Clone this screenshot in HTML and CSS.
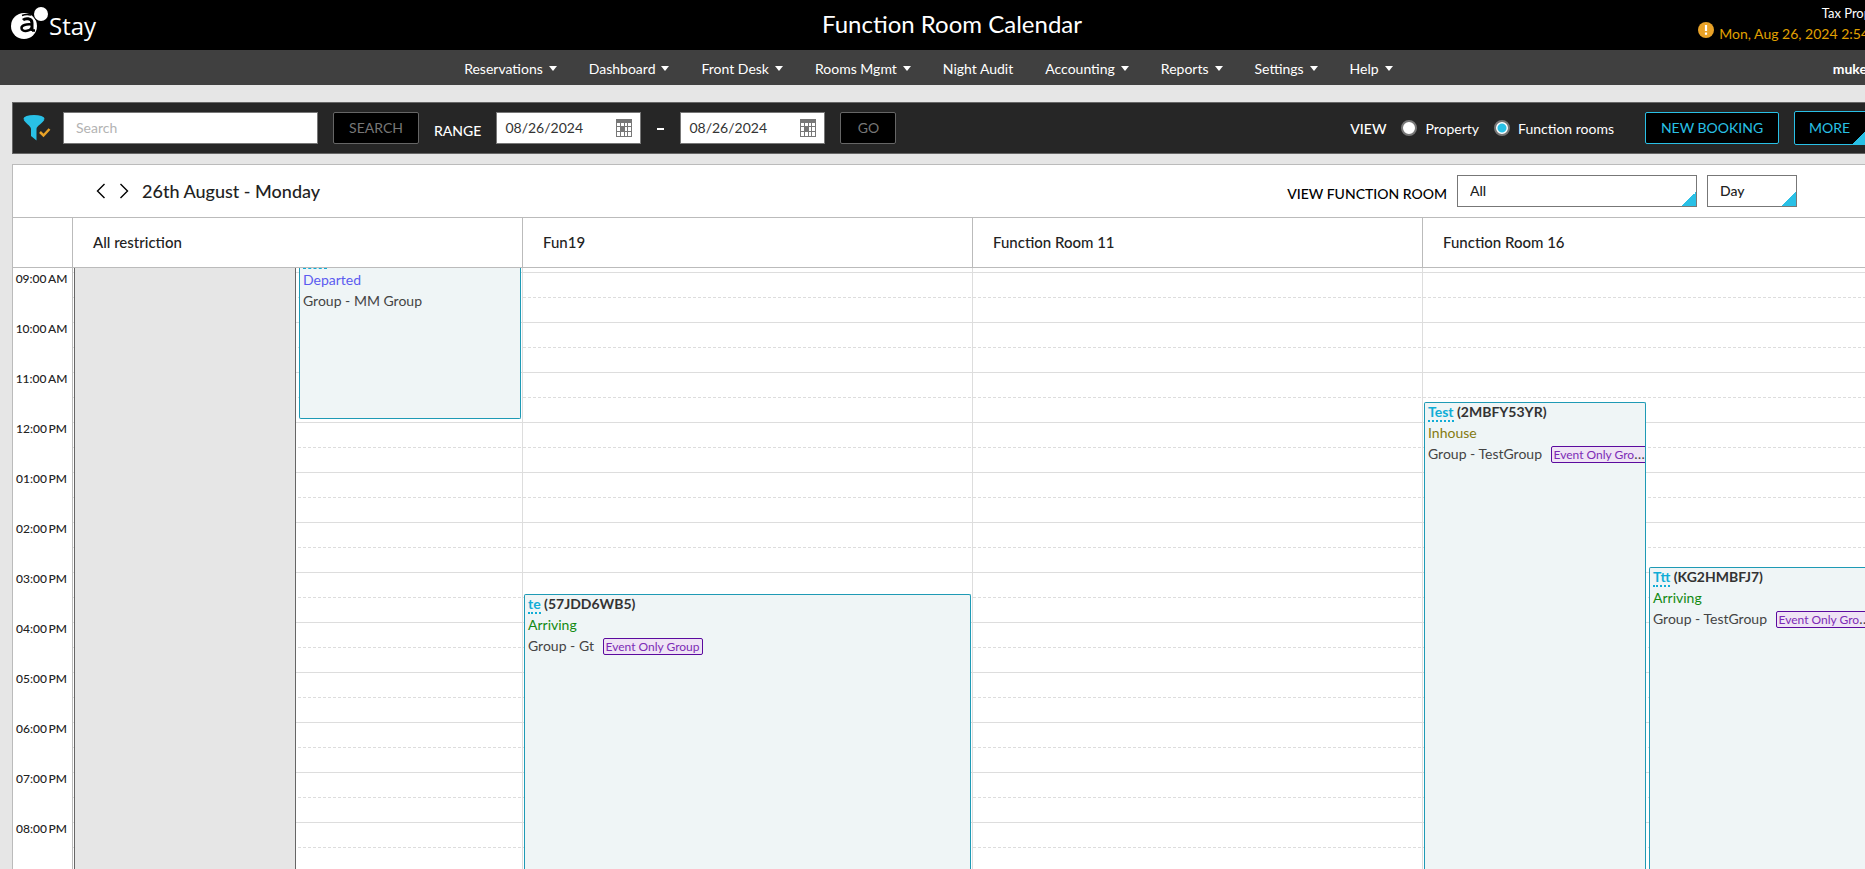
FILE: index.html
```
<!DOCTYPE html>
<html lang="en">
<head>
<meta charset="utf-8">
<title>Function Room Calendar</title>
<link rel="stylesheet" href="styles.css">
</head>
<body>
<div class="app">
  <header class="topbar">
    <a class="logo" href="#">
      <svg class="logo-mark" width="40" height="36" viewBox="0 0 40 36" aria-hidden="true">
        <circle cx="14" cy="20" r="13" fill="#fff"/>
        <circle cx="31" cy="8" r="8" fill="#000"/>
        <circle cx="31" cy="8" r="7" fill="#fff"/>
        <path d="M13 14c2-1.800 9-2.500 9 3V25" fill="none" stroke="#000" stroke-width="3"/>
        <path d="M22 18.500c-6-.5-10.500.5-10.500 3.500 0 4 8 4 10.500-.5M22 24.500h3" fill="none" stroke="#000" stroke-width="2.500"/>
        <path d="M12 9.500c4-1.500 6-1 9-.5" fill="none" stroke="#000" stroke-width="1.500"/>
      </svg>
      <span class="logo-name">Stay</span>
    </a>
    <h1 class="title">Function Room Calendar</h1>
    <div class="property">
      <div class="property-name">Tax Property</div>
      <div class="property-date">
        <svg width="16" height="16" viewBox="0 0 16 16" aria-hidden="true"><circle cx="8" cy="8" r="8" fill="#e9a227"/><path d="M8 3v6M8 10.500v2.300" stroke="#fff" stroke-width="2.200"/></svg>
        <span>Mon, Aug 26, 2024 2:54 PM</span>
      </div>
    </div>
  </header>

  <div class="navbar">
    <nav class="menu">
      <a class="has-menu" href="#">Reservations</a>
      <a class="has-menu" href="#">Dashboard</a>
      <a class="has-menu" href="#">Front Desk</a>
      <a class="has-menu" href="#">Rooms Mgmt</a>
      <a href="#">Night Audit</a>
      <a class="has-menu" href="#">Accounting</a>
      <a class="has-menu" href="#">Reports</a>
      <a class="has-menu" href="#">Settings</a>
      <a class="has-menu" href="#">Help</a>
    </nav>
    <a class="user has-menu" href="#">mukesh</a>
  </div>

  <form class="toolbar">
    <button class="filter" type="button" aria-label="Filter">
      <svg width="28" height="26" viewBox="0 0 28 26" aria-hidden="true">
        <ellipse cx="11" cy="3.500" rx="10.500" ry="3.500" fill="#29c0e6"/>
        <path d="M.5 4.500C2 8 8 11 8 14v7l5.500 4.500V14c0-3 6.500-6 8-9.500z" fill="#29c0e6"/>
        <path d="M17 17l3.500 3.500L26.500 14" fill="none" stroke="#e9a227" stroke-width="2.500"/>
      </svg>
    </button>
    <input class="field search" type="text" placeholder="Search" aria-label="Search">
    <button class="btn btn-search" type="button">SEARCH</button>
    <label class="range-label" for="from">RANGE</label>
    <span class="field date">
      <input id="from" type="text" value="08/26/2024">
      <svg width="16" height="18" viewBox="0 0 16 18" aria-hidden="true"><path d="M0 0h16v18H0z" fill="#777"/><path d="M1 4h3v3H1zM5 4h3v3H5zM9 4h2v3H9zM12 4h3v3h-3zM1 8h3v4H1zM9 8h2v4H9zM12 8h3v4h-3zM1 13h3v4H1zM5 13h3v4H5zM9 13h2v4H9zM12 13h3v4h-3z" fill="#fff"/></svg>
    </span>
    <span class="dash"></span>
    <span class="field date">
      <input type="text" value="08/26/2024" aria-label="Range end">
      <svg width="16" height="18" viewBox="0 0 16 18" aria-hidden="true"><path d="M0 0h16v18H0z" fill="#777"/><path d="M1 4h3v3H1zM5 4h3v3H5zM9 4h2v3H9zM12 4h3v3h-3zM1 8h3v4H1zM9 8h2v4H9zM12 8h3v4h-3zM1 13h3v4H1zM5 13h3v4H5zM9 13h2v4H9zM12 13h3v4h-3z" fill="#fff"/></svg>
    </span>
    <button class="btn btn-go" type="button">GO</button>
    <div class="view">
      <span class="view-label">VIEW</span>
      <label class="radio"><input type="radio" name="view">Property</label>
      <label class="radio"><input type="radio" name="view" checked>Function rooms</label>
    </div>
    <button class="btn btn-accent" type="button">NEW BOOKING</button>
    <button class="btn btn-accent btn-more" type="button">MORE</button>
  </form>

  <main class="calendar">
    <div class="calendar-head">
      <button class="arrow" type="button" aria-label="Previous day"><svg width="10" height="16" viewBox="0 0 10 16"><path d="M8.500 1L1.500 8l7 7" fill="none" stroke="#000" stroke-width="1.400"/></svg></button>
      <button class="arrow" type="button" aria-label="Next day"><svg width="10" height="16" viewBox="0 0 10 16"><path d="M1.500 1l7 7-7 7" fill="none" stroke="#000" stroke-width="1.400"/></svg></button>
      <h2 class="day-title">26th August - Monday</h2>
      <label class="room-label" for="room">VIEW FUNCTION ROOM</label>
      <select class="select select-room" id="room"><option>All</option></select>
      <select class="select select-span" aria-label="Calendar span"><option>Day</option></select>
    </div>

    <div class="columns rooms">
      <div class="room-corner"></div>
      <div class="room">All restriction</div>
      <div class="room">Fun19</div>
      <div class="room">Function Room 11</div>
      <div class="room">Function Room 16</div>
    </div>

    <div class="columns slots">
      <div class="times">
        <div class="time">09:00&#8201;AM</div>
        <div class="time">10:00&#8201;AM</div>
        <div class="time">11:00&#8201;AM</div>
        <div class="time">12:00&#8201;PM</div>
        <div class="time">01:00&#8201;PM</div>
        <div class="time">02:00&#8201;PM</div>
        <div class="time">03:00&#8201;PM</div>
        <div class="time">04:00&#8201;PM</div>
        <div class="time">05:00&#8201;PM</div>
        <div class="time">06:00&#8201;PM</div>
        <div class="time">07:00&#8201;PM</div>
        <div class="time">08:00&#8201;PM</div>
      </div>
      <div class="lane split">
        <div class="restriction"></div>
        <div class="event continued" style="--length:151">
          <div class="event-lead"></div>
          <div class="status departed">Departed</div>
          <div class="group">Group - MM Group</div>
        </div>
      </div>
      <div class="lane">
        <div class="event" style="--start:326">
          <div class="event-name"><a href="#">te</a> (57JDD6WB5)</div>
          <div class="status arriving">Arriving</div>
          <div class="group">Group - Gt <span class="tag">Event Only Group</span></div>
        </div>
      </div>
      <div class="lane"></div>
      <div class="lane split">
        <div class="event" style="--start:134">
          <div class="event-name"><a href="#">Test</a> (2MBFY53YR)</div>
          <div class="status inhouse">Inhouse</div>
          <div class="group">Group - TestGroup <span class="tag">Event Only Group</span></div>
        </div>
        <div class="event" style="--start:299">
          <div class="event-name"><a href="#">Ttt</a> (KG2HMBFJ7)</div>
          <div class="status arriving">Arriving</div>
          <div class="group">Group - TestGroup <span class="tag">Event Only Group</span></div>
        </div>
      </div>
    </div>
  </main>
</div>
</body>
</html>
```
FILE: styles.css
```
* { box-sizing: border-box; }

body {
  margin: 0;
  overflow: hidden;
  background: #e6e6e6;
  color: #222;
  font-family: Lato, "Open Sans", sans-serif;
  font-size: 14px;
  font-weight: 400;
}

a { color: inherit; text-decoration: none; }

button, input, select {
  margin: 0;
  padding: 0;
  border: 0;
  background: none;
  color: inherit;
  font: inherit;
}

/* The app runs slightly past the right edge of the window. */
.app {
  display: flex;
  flex-direction: column;
  width: calc(100% + 36px);
  height: 100vh;
}

.topbar {
  display: grid;
  grid-template-columns: 1fr auto 1fr;
  align-items: start;
  height: 50px;
  padding: 0 7px 0 10px;
  background: #000;
  color: #fff;
}

.logo { display: flex; padding-top: 6px; }
.logo-name {
  margin-left: -1px;
  font-family: "Open Sans", "Noto Sans", sans-serif;
  font-size: 24px;
  line-height: 40px;
}

.title {
  margin: 0;
  font-size: 24px;
  font-weight: 400;
  line-height: 48px;
}

.property { justify-self: end; text-align: right; white-space: nowrap; }
.property-name { font-size: 13px; line-height: 18px; padding-top: 4px; }
.property-date { display: flex; gap: 5px; color: #e0a000; line-height: 24px; }

.navbar {
  display: flex;
  align-items: center;
  height: 35px;
  padding: 1px 6px 0 24px;
  background: #404040;
  color: #fff;
}

.menu { display: flex; gap: 32px; margin: 0 auto; }
.has-menu { display: flex; align-items: center; }
.has-menu::after {
  content: "";
  margin-left: 6px;
  border: 4px solid transparent;
  border-top: 5px solid #fff;
  border-bottom: 0;
}
.user { font-weight: 700; }

.toolbar {
  display: flex;
  align-items: center;
  height: 52px;
  margin: 17px 28px 10px 12px;
  padding: 0 3px 0 10px;
  border: 1px solid #666;
  background: #262626;
  color: #fff;
}

.filter { height: 26px; }
.field { height: 32px; border: 1px solid #777; background: #fff; color: #333; }
.search { width: 255px; margin-left: 12px; padding: 0 12px 2px; }
.search::placeholder { color: #b3b3b3; opacity: 1; }

.btn {
  height: 32px;
  padding-bottom: 2px;
  border: 1px solid #666;
  border-radius: 2px;
  background: #000;
  color: #777;
}
.btn-search { width: 86px; margin-left: 15px; }
.btn-go { width: 56px; margin-left: 15px; }
.range-label { margin: 4px 15px 0; font-weight: 500; }
.date { display: flex; align-items: center; width: 145px; padding: 0 8px; }
.date input { flex: 1; min-width: 0; padding-bottom: 2px; }
.dash { width: 7px; height: 2px; margin: 2px 16px 0; background: #fff; }

.view { display: flex; align-items: center; gap: 15px; margin-left: auto; }
.view-label { font-weight: 500; }
.radio { display: flex; align-items: center; gap: 8px; }
.radio input {
  appearance: none;
  width: 16px;
  height: 16px;
  border: 2px solid #777;
  border-radius: 50%;
  background: #fff;
}
.radio input:checked { background: radial-gradient(circle, #29c0e6 4px, #fff 5px); }

.btn-accent { width: 134px; margin-left: 31px; border-color: #29c0e6; color: #29c0e6; }
.btn-more {
  width: 75px;
  height: 34px;
  margin-left: 15px;
  padding-right: 4px;
  background: linear-gradient(135deg, transparent 50%, #29c0e6 50%) right bottom / 15px 15px no-repeat #000;
}

.calendar {
  display: flex;
  flex: 1;
  flex-direction: column;
  min-height: 0;
  margin: 0 28px 0 12px;
  border: 1px solid #bbb;
  border-width: 1px 0 0 1px;
  background: #fff;
}

.calendar-head {
  display: flex;
  align-items: center;
  height: 53px;
  padding: 0 76px 0 83px;
  border-bottom: 1px solid #bbb;
}

.arrow { height: 16px; margin-right: 13px; line-height: 0; }
.day-title { margin: 0; font-size: 18px; font-weight: 500; }
.room-label { margin-left: auto; padding-top: 4px; color: #000; font-weight: 500; }
.select {
  appearance: none;
  height: 32px;
  margin-left: 10px;
  padding: 0 0 2px 12px;
  border: 1px solid #777;
  border-radius: 0;
  background: linear-gradient(135deg, transparent 50%, #29c0e6 50%) right bottom / 14px 14px no-repeat #fff;
  font-weight: 500;
}
.select-room { width: 240px; }
.select-span { width: 90px; }

.columns { display: grid; grid-template-columns: 60px repeat(4, 1fr); }

.rooms { height: 50px; border-bottom: 1px solid #bbb; font-size: 15px; font-weight: 500; line-height: 48px; }
.room-corner, .room { border-right: 1px solid #bbb; }
.room { padding-left: 20px; }

.slots { flex: 1; min-height: 0; overflow: hidden; }
.times { height: 604px; padding: 4px 2px 0 0; border-right: 1px solid #bbb; }
.time { height: 50px; font-size: 12px; font-weight: 500; line-height: 14px; text-align: center; }

/* One hour is 50px: a solid rule on the hour, a dashed one on the half. */
.lane {
  display: grid;
  gap: 3px;
  padding: 0 1px;
  border-right: 1px solid #ddd;
  background:
    linear-gradient(#ddd 1px, transparent 1px) 0 4px / 5px 50px,
    linear-gradient(90deg, transparent 60%, #fff 60%) 0 0 / 5px 100%,
    linear-gradient(#ddd 1px, transparent 1px) 0 29px / 5px 50px;
}
.split { grid-template-columns: 1fr 1fr; }

.restriction { border: 1px solid #666; border-width: 0 1px; background: #e6e6e6; }

.event {
  min-width: 0;
  margin-top: calc(var(--start, 0) * 1px);
  padding-left: 3px;
  overflow: hidden;
  border: 1px solid #1e9ab5;
  border-bottom: 0;
  border-radius: 2px 2px 0 0;
  background: #eff5f6;
  line-height: 21px;
}
.continued {
  height: calc(var(--length) * 1px);
  border-top: 0;
  border-bottom: 1px solid #1e9ab5;
  border-radius: 0 0 2px 2px;
}
.event-lead { width: 24px; height: 1px; border-top: 1px dashed #10add6; }
.event-name { height: 19px; line-height: 18px; font-weight: 700; color: #333; }
.event-name a { border-bottom: 2px dotted #10add6; color: #10add6; }
.departed { color: #5b5bf0; }
.arriving { color: #128a12; }
.inhouse { color: #857a10; }
.group { overflow: hidden; color: #444; text-overflow: ellipsis; white-space: nowrap; }
.tag {
  margin-left: 5px;
  padding: 0 2px;
  border: 1px solid #5b0a9e;
  border-radius: 2px;
  background: #efe4f5;
  color: #7d2bb5;
  font-size: 12px;
}
```
